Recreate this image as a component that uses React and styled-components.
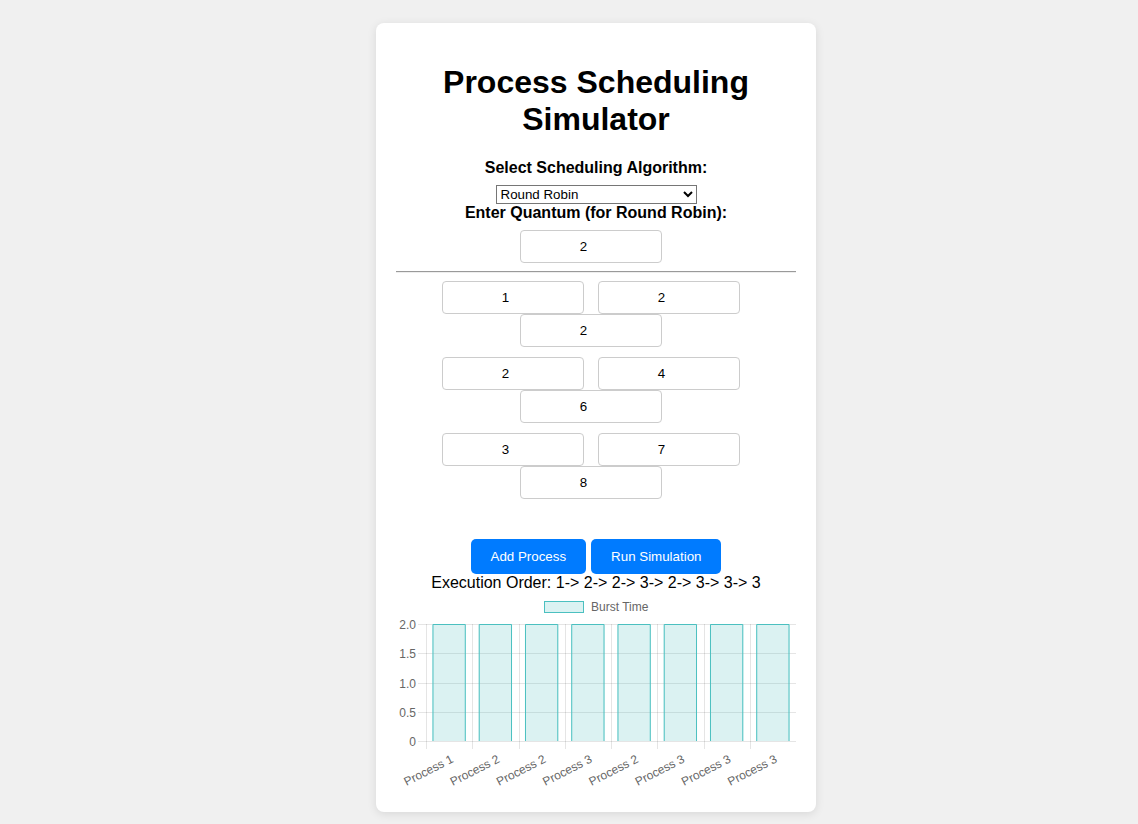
import React from "react";
import styled, { createGlobalStyle } from "styled-components";

const GlobalStyle = createGlobalStyle`
  html, body {
    margin: 0;
    padding: 0;
    background: #f0f0f0;
    font-family: "Liberation Sans", Arial, sans-serif;
  }
`;

const Page = styled.div`
  display: flex;
  justify-content: center;
  padding: 23px 0 12px 54px;
`;

const Card = styled.div`
  width: 440px;
  box-sizing: border-box;
  padding: 20px;
  background: #fff;
  border-radius: 8px;
  box-shadow: 0 2px 10px rgba(0, 0, 0, 0.1);
  text-align: center;
`;

const Title = styled.h1`
  font-size: 32px;
  font-weight: bold;
  line-height: 37px;
  margin: 21px 0 21px;
  color: #000;
`;

const Label = styled.label`
  display: block;
  font-size: 16px;
  font-weight: bold;
  line-height: 18px;
  margin-bottom: 8px;
  color: #000;
`;

const Select = styled.select`
  display: block;
  margin: 0 auto;
  width: 201px;
  height: 19px;
  font-family: "Liberation Sans", Arial, sans-serif;
  font-size: 13.33px;
  color: #000;
  background: #fff;
  border: 1px solid #767676;
  border-radius: 0;
  padding: 0;
`;

const InputRow = styled.div`
  display: flex;
  flex-wrap: wrap;
  justify-content: center;
  column-gap: 4px;
  margin-bottom: ${(p) => p.$mb || 0}px;
`;

const NumInput = styled.input`
  width: 142px;
  height: 33px;
  box-sizing: border-box;
  margin: 0 10px 0 0;
  padding: 8px 23px 8px 8px;
  border: 1px solid #ccc;
  border-radius: 4px;
  font-family: "Liberation Sans", Arial, sans-serif;
  font-size: 13.33px;
  color: #000;
  text-align: center;
  background: #fff;
  outline: none;
  -moz-appearance: textfield;
  &::-webkit-inner-spin-button,
  &::-webkit-outer-spin-button {
    -webkit-appearance: none;
    margin: 0;
  }
`;

const Divider = styled.hr`
  margin: 8px 0;
  border: none;
  border-top: 1px solid #9a9a9a;
  border-bottom: 1px solid #eeeeee;
  height: 0;
`;

const ButtonRow = styled.div`
  display: flex;
  justify-content: center;
  gap: 5px;
  margin-top: 40px;
`;

const Button = styled.button`
  background: #007bff;
  color: #fff;
  border: none;
  border-radius: 5px;
  padding: 10px 20px;
  height: 35px;
  font-family: "Liberation Sans", Arial, sans-serif;
  font-size: 13.33px;
  line-height: 15px;
  cursor: pointer;
`;

const Output = styled.div`
  font-size: 16px;
  line-height: 18px;
  color: #000;
`;

const ChartBox = styled.div`
  width: 400px;
  height: 200px;
`;

const processes = [
  ["1", "2", "2"],
  ["2", "4", "6"],
  ["3", "7", "8"],
];

const labels = [
  "Process 1",
  "Process 2",
  "Process 2",
  "Process 3",
  "Process 2",
  "Process 3",
  "Process 3",
  "Process 3",
];

function Chart() {
  const left = 30;
  const right = 400;
  const top = 32;
  const bottom = 149;
  const cat = (right - left) / labels.length;
  const barW = cat * 0.72;
  const yTicks = [
    ["2.0", 2],
    ["1.5", 1.5],
    ["1.0", 1],
    ["0.5", 0.5],
    ["0", 0],
  ];
  const yPix = (v) => bottom - (v / 2) * (bottom - top);
  const grid = "rgba(0,0,0,0.1)";
  const teal = "rgb(75,192,192)";
  const fontFamily = "'Liberation Sans', Arial, sans-serif";
  return (
    <svg width="400" height="200" viewBox="0 0 400 200">
      <rect x="148.5" y="9.5" width="39" height="11" fill="rgba(75,192,192,0.2)" stroke={teal} strokeWidth="1" />
      <text x="195" y="15" fontSize="12" fill="#666" fontFamily={fontFamily} dominantBaseline="central">
        Burst Time
      </text>
      {yTicks.map(([t, v]) => {
        const y = Math.round(yPix(v)) + 0.5;
        return (
          <g key={t}>
            <line x1="22" x2={right} y1={y} y2={y} stroke={grid} strokeWidth="1" />
            <text x="20" y={y} fontSize="12" fill="#666" fontFamily={fontFamily} textAnchor="end" dominantBaseline="central">
              {t}
            </text>
          </g>
        );
      })}
      {Array.from({ length: labels.length + 1 }).map((_, k) => {
        const x = Math.round(left + cat * k) + 0.5;
        return <line key={k} x1={x} x2={x} y1={top} y2={bottom + 8} stroke={grid} strokeWidth="1" />;
      })}
      {labels.map((l, k) => {
        const cx = left + cat * k + cat / 2;
        const x0 = cx - barW / 2;
        const x1 = cx + barW / 2;
        const yt = yPix(2);
        return (
          <g key={k}>
            <rect x={x0} y={yt} width={barW} height={bottom - yt} fill="rgba(75,192,192,0.2)" />
            <path
              d={`M${x0 + 0.5} ${bottom} L${x0 + 0.5} ${yt + 0.5} L${x1 - 0.5} ${yt + 0.5} L${x1 - 0.5} ${bottom}`}
              fill="none"
              stroke={teal}
              strokeWidth="1"
            />
            <text
              x={cx}
              y={160}
              fontSize="12"
              fill="#666"
              fontFamily={fontFamily}
              textAnchor="end"
              dominantBaseline="text-before-edge"
              transform={`rotate(-27 ${cx} 160)`}
            >
              {l}
            </text>
          </g>
        );
      })}
    </svg>
  );
}

export default function App() {
  return (
    <>
      <GlobalStyle />
      <Page>
        <Card>
          <Title>Process Scheduling Simulator</Title>
          <Label htmlFor="algo">Select Scheduling Algorithm:</Label>
          <Select id="algo" defaultValue="rr">
            <option value="fcfs">First Come First Serve</option>
            <option value="sjf">Shortest Job First</option>
            <option value="rr">Round Robin</option>
          </Select>
          <Label htmlFor="quantum">Enter Quantum (for Round Robin):</Label>
          <InputRow>
            <NumInput id="quantum" type="number" defaultValue="2" />
          </InputRow>
          <Divider />
          {processes.map((p, i) => (
            <InputRow key={i} $mb={10}>
              {p.map((v, j) => (
                <NumInput key={j} type="number" defaultValue={v} />
              ))}
            </InputRow>
          ))}
          <ButtonRow>
            <Button>Add Process</Button>
            <Button>Run Simulation</Button>
          </ButtonRow>
          <Output>Execution Order: 1-&gt; 2-&gt; 2-&gt; 3-&gt; 2-&gt; 3-&gt; 3-&gt; 3</Output>
          <ChartBox>
            <Chart />
          </ChartBox>
        </Card>
      </Page>
    </>
  );
}
